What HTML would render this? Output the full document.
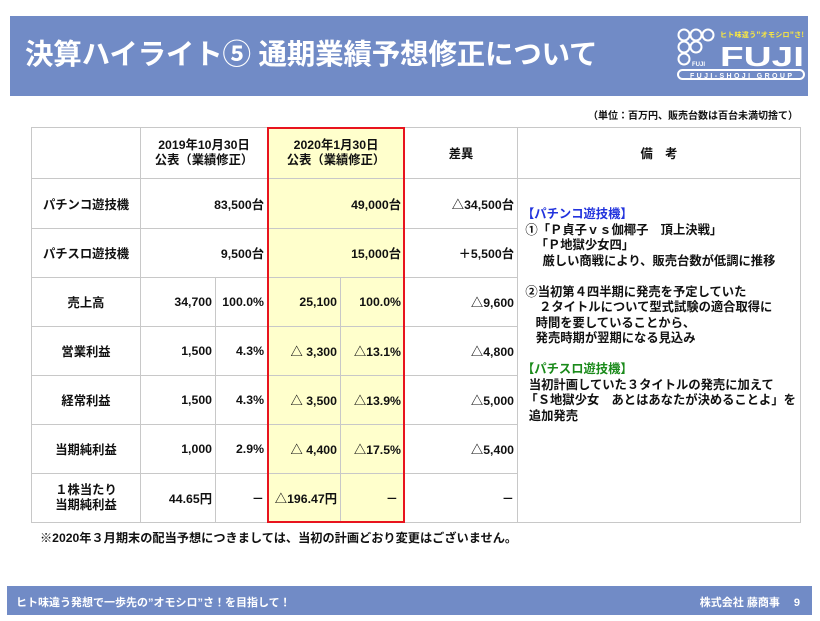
<!DOCTYPE html>
<html><head><meta charset="utf-8"><style>
*{margin:0;padding:0;box-sizing:border-box}
body{width:820px;height:621px;background:#fff;position:relative;overflow:hidden;font-family:"Liberation Sans","Noto Sans CJK JP",sans-serif;font-weight:bold;color:#111}
.a{position:absolute}
.hd{left:10px;top:16px;width:798px;height:80px;background:#718bc6}
.tt{left:25px;top:32px;color:#fff;font-size:28.5px;letter-spacing:-0.2px;white-space:nowrap}
.ft{left:7px;top:586px;width:805px;height:29px;background:#718bc6;color:#fff;font-size:11px}
.c{position:absolute;border:1px solid #c8c8c8;display:flex;align-items:center;font-size:12.3px;white-space:nowrap}
.y{background:#ffffcc}
.l{justify-content:center;text-align:center}
.r{justify-content:flex-end;padding-right:3px}
.memo{font-size:12.3px;line-height:15.5px;white-space:pre}
</style></head><body>
<div class="a hd"></div>
<div class="a tt">決算ハイライト⑤ 通期業績予想修正について</div>
<svg class="a" style="left:676px;top:28px" width="132" height="54" viewBox="0 0 132 54">
 <g fill="none" stroke="#fff" stroke-width="2">
  <circle cx="8" cy="7" r="5.5"/><circle cx="20" cy="7" r="5.5"/><circle cx="32" cy="7" r="5.5"/>
  <circle cx="8" cy="19" r="5.5"/><circle cx="20" cy="19" r="5.5"/>
  <circle cx="8" cy="31" r="5.5"/>
  <rect x="2" y="42" width="126" height="9" rx="4.5"/>
 </g>
 <text x="44" y="9" font-size="7" fill="#ffeb3b" font-family="Noto Sans CJK JP" font-weight="bold" textLength="84">ヒト味違う"オモシロ"さ!</text>
 <text x="44" y="38" font-size="28" fill="#fff" font-family="Liberation Sans" font-weight="bold" textLength="84" lengthAdjust="spacingAndGlyphs">FUJI</text>
 <text x="16" y="38" font-size="6" fill="#fff" font-family="Liberation Sans" font-weight="bold">FUJI</text>
 <text x="14" y="50" font-size="7" fill="#fff" font-family="Liberation Sans" font-weight="bold" textLength="102">FUJI-SHOJI GROUP</text>
</svg>
<div class="a" style="right:22px;top:107px;font-size:10px">（単位：百万円、販売台数は百台未満切捨て）</div>

<div class="c" style="left:31px;top:127px;width:110px;height:52px"></div>
<div class="c l" style="left:140px;top:127px;width:128px;height:52px;line-height:15px">2019年10月30日<br>公表（業績修正）</div>
<div class="c l y" style="left:267px;top:127px;width:138px;height:52px;line-height:15px">2020年1月30日<br>公表（業績修正）</div>
<div class="c l" style="left:404px;top:127px;width:114px;height:52px">差異</div>
<div class="c l" style="left:517px;top:127px;width:284px;height:52px">備　考</div>
<div class="c" style="left:517px;top:178px;width:284px;height:345px"></div>

<div class="c l" style="left:31px;top:178px;width:110px;height:51px">パチンコ遊技機</div>
<div class="c r" style="left:140px;top:178px;width:128px;height:51px">83,500台</div>
<div class="c r y" style="left:267px;top:178px;width:138px;height:51px">49,000台</div>
<div class="c r" style="left:404px;top:178px;width:114px;height:51px">△34,500台</div>

<div class="c l" style="left:31px;top:228px;width:110px;height:50px">パチスロ遊技機</div>
<div class="c r" style="left:140px;top:228px;width:128px;height:50px">9,500台</div>
<div class="c r y" style="left:267px;top:228px;width:138px;height:50px">15,000台</div>
<div class="c r" style="left:404px;top:228px;width:114px;height:50px">＋5,500台</div>

<div class="c l" style="left:31px;top:277px;width:110px;height:50px">売上高</div>
<div class="c r" style="left:140px;top:277px;width:76px;height:50px">34,700</div>
<div class="c r" style="left:215px;top:277px;width:53px;height:50px">100.0%</div>
<div class="c r y" style="left:267px;top:277px;width:74px;height:50px">25,100</div>
<div class="c r y" style="left:340px;top:277px;width:65px;height:50px">100.0%</div>
<div class="c r" style="left:404px;top:277px;width:114px;height:50px">△9,600</div>

<div class="c l" style="left:31px;top:326px;width:110px;height:50px">営業利益</div>
<div class="c r" style="left:140px;top:326px;width:76px;height:50px">1,500</div>
<div class="c r" style="left:215px;top:326px;width:53px;height:50px">4.3%</div>
<div class="c r y" style="left:267px;top:326px;width:74px;height:50px">△ 3,300</div>
<div class="c r y" style="left:340px;top:326px;width:65px;height:50px">△13.1%</div>
<div class="c r" style="left:404px;top:326px;width:114px;height:50px">△4,800</div>

<div class="c l" style="left:31px;top:375px;width:110px;height:50px">経常利益</div>
<div class="c r" style="left:140px;top:375px;width:76px;height:50px">1,500</div>
<div class="c r" style="left:215px;top:375px;width:53px;height:50px">4.3%</div>
<div class="c r y" style="left:267px;top:375px;width:74px;height:50px">△ 3,500</div>
<div class="c r y" style="left:340px;top:375px;width:65px;height:50px">△13.9%</div>
<div class="c r" style="left:404px;top:375px;width:114px;height:50px">△5,000</div>

<div class="c l" style="left:31px;top:424px;width:110px;height:50px">当期純利益</div>
<div class="c r" style="left:140px;top:424px;width:76px;height:50px">1,000</div>
<div class="c r" style="left:215px;top:424px;width:53px;height:50px">2.9%</div>
<div class="c r y" style="left:267px;top:424px;width:74px;height:50px">△ 4,400</div>
<div class="c r y" style="left:340px;top:424px;width:65px;height:50px">△17.5%</div>
<div class="c r" style="left:404px;top:424px;width:114px;height:50px">△5,400</div>

<div class="c l" style="left:31px;top:473px;width:110px;height:50px;line-height:15px">１株当たり<br>当期純利益</div>
<div class="c r" style="left:140px;top:473px;width:76px;height:50px">44.65円</div>
<div class="c r" style="left:215px;top:473px;width:53px;height:50px">－</div>
<div class="c r y" style="left:267px;top:473px;width:74px;height:50px">△196.47円</div>
<div class="c r y" style="left:340px;top:473px;width:65px;height:50px;padding-right:6px">－</div>
<div class="c r" style="left:404px;top:473px;width:114px;height:50px">－</div>

<div class="a" style="left:267px;top:127px;width:138px;height:396px;border:2px solid #e8141e"></div>

<div class="a memo" style="left:522px;top:207px"><span style="color:#2233dd">【パチンコ遊技機】</span>
 ①「Ｐ貞子ｖｓ伽椰子　頂上決戦」
    「Ｐ地獄少女四」
      厳しい商戦により、販売台数が低調に推移

 ②当初第４四半期に発売を予定していた
     ２タイトルについて型式試験の適合取得に
    時間を要していることから、
    発売時期が翌期になる見込み

<span style="color:#1a8a1a">【パチスロ遊技機】</span>
  当初計画していた３タイトルの発売に加えて
 「Ｓ地獄少女　あとはあなたが決めることよ」を
  追加発売</div>

<div class="a" style="left:40px;top:528px;font-size:12.2px">※2020年３月期末の配当予想につきましては、当初の計画どおり変更はございません。</div>

<div class="a ft"><span class="a" style="left:9px;top:8px">ヒト味違う発想で一歩先の”オモシロ”さ！を目指して！</span><span class="a" style="right:12px;top:8px">株式会社  藤商事　 9</span></div>
</body></html>
